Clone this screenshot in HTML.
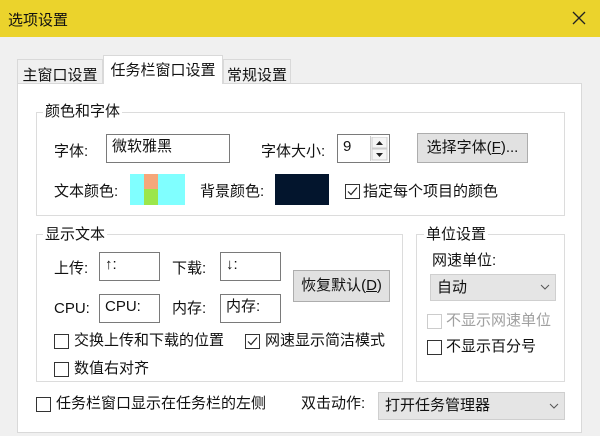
<!DOCTYPE html>
<html><head><meta charset="utf-8"><style>
*{box-sizing:border-box;margin:0;padding:0}
body{width:600px;height:436px;background:#f0f0f0;position:relative;overflow:hidden;font-family:"Liberation Sans","Noto Sans CJK SC",sans-serif;font-size:15px;color:#111}
.a{position:absolute;white-space:nowrap}
.t{line-height:18px;height:18px}
.title{left:0;top:0;width:600px;height:37px;background:#ebd32c}
.tab{border:1px solid #d9d9d9;border-bottom:none;background:#f0f0f0;text-align:center;padding-top:4px}
.panel{left:17px;top:83px;width:565px;height:350px;background:#fff;border:1px solid #d9d9d9}
.grp{border:1px solid #dcdcdc}
.gt{background:#fff;padding:0 2px}
.in{border:1px solid #7a7a7a;background:#fff;padding:2px 5px;line-height:20px}
.btn{border:1px solid #adadad;background:#e1e1e1;text-align:center}
.cb{width:15px;height:15px;border:1px solid #333;background:#fff}
.dd{background:#e5e5e5;border:1px solid #cfcfcf;padding-left:6px}
</style></head><body>
<div class="a title"></div>
<div class="a t" style="left:8px;top:12px;font-size:15px">选项设置</div>
<svg class="a" style="left:571px;top:10px" width="16" height="16"><path d="M2 2L14 14M14 2L2 14" stroke="#222" stroke-width="1.3"/></svg>
<div class="a tab" style="left:17px;top:59px;width:86px;height:24px">主窗口设置</div>
<div class="a tab" style="left:223px;top:59px;width:68px;height:24px">常规设置</div>
<div class="a panel"></div>
<div class="a tab" style="left:103px;top:55px;width:120px;height:29px;background:#fff;padding-top:3px">任务栏窗口设置</div>

<div class="a grp" style="left:36px;top:112px;width:529px;height:104px"></div>
<div class="a t gt" style="left:43px;top:103px">颜色和字体</div>
<div class="a t" style="left:54px;top:143px">字体:</div>
<div class="a in" style="left:106px;top:134px;width:124px;height:29px">微软雅黑</div>
<div class="a t" style="left:261px;top:143px">字体大小:</div>
<div class="a in" style="left:337px;top:134px;width:53px;height:29px">9</div>
<div class="a" style="left:370px;top:136px;width:18px;height:25px;border-left:1px solid #ccc"></div>
<svg class="a" style="left:371px;top:137px" width="17" height="24"><rect x="1" y="0" width="15" height="11" fill="#f5f5f5" stroke="#ccc"/><rect x="1" y="12" width="15" height="11" fill="#f5f5f5" stroke="#ccc"/><path d="M5 8L8.5 4L12 8Z M5 16L8.5 20L12 16Z" fill="#222"/></svg>
<div class="a btn t" style="left:417px;top:133px;width:111px;height:30px;line-height:28px">选择字体(<u>F</u>)...</div>
<div class="a t" style="left:54px;top:183px">文本颜色:</div>
<div class="a" style="left:130px;top:174px;width:55px;height:31px;background:#80ffff"></div>
<div class="a" style="left:144px;top:174px;width:14px;height:15px;background:#f5a77a"></div>
<div class="a" style="left:144px;top:189px;width:14px;height:16px;background:#9be64b"></div>
<div class="a t" style="left:200px;top:183px">背景颜色:</div>
<div class="a" style="left:275px;top:174px;width:54px;height:31px;background:#03152d"></div>
<div class="a cb" style="left:345px;top:184px"></div>
<svg class="a" style="left:345px;top:184px" width="15" height="15"><path d="M3 7.5L6 10.5L12 3.5" stroke="#222" fill="none" stroke-width="1.2"/></svg>
<div class="a t" style="left:363px;top:183px">指定每个项目的颜色</div>

<div class="a grp" style="left:36px;top:234px;width:367px;height:148px"></div>
<div class="a t gt" style="left:43px;top:226px">显示文本</div>
<div class="a t" style="left:54px;top:260px">上传:</div>
<div class="a in" style="left:99px;top:252px;width:61px;height:29px">↑:</div>
<div class="a t" style="left:172px;top:260px">下载:</div>
<div class="a in" style="left:220px;top:252px;width:61px;height:29px">↓:</div>
<div class="a t" style="left:54px;top:300px">CPU:</div>
<div class="a in" style="left:99px;top:294px;width:61px;height:29px">CPU:</div>
<div class="a t" style="left:172px;top:300px">内存:</div>
<div class="a in" style="left:220px;top:294px;width:61px;height:29px">内存:</div>
<div class="a btn t" style="left:293px;top:270px;width:97px;height:32px;line-height:30px">恢复默认(<u>D</u>)</div>
<div class="a cb" style="left:54px;top:334px"></div>
<div class="a t" style="left:74px;top:332px">交换上传和下载的位置</div>
<div class="a cb" style="left:245px;top:334px"></div>
<svg class="a" style="left:245px;top:334px" width="15" height="15"><path d="M3 7.5L6 10.5L12 3.5" stroke="#222" fill="none" stroke-width="1.2"/></svg>
<div class="a t" style="left:265px;top:332px">网速显示简洁模式</div>
<div class="a cb" style="left:54px;top:362px"></div>
<div class="a t" style="left:74px;top:360px">数值右对齐</div>

<div class="a grp" style="left:416px;top:234px;width:149px;height:148px"></div>
<div class="a t gt" style="left:424px;top:226px">单位设置</div>
<div class="a t" style="left:432px;top:252px">网速单位:</div>
<div class="a dd t" style="left:430px;top:274px;width:126px;height:27px;line-height:25px">自动</div>
<svg class="a" style="left:540px;top:284px" width="10" height="6"><path d="M1 1L5 5L9 1" stroke="#555" fill="none"/></svg>
<div class="a cb" style="left:427px;top:314px;border-color:#ccc"></div>
<div class="a t" style="left:446px;top:312px;color:#a0a0a0">不显示网速单位</div>
<div class="a cb" style="left:427px;top:340px"></div>
<div class="a t" style="left:446px;top:338px">不显示百分号</div>

<div class="a cb" style="left:36px;top:397px"></div>
<div class="a t" style="left:56px;top:395px">任务栏窗口显示在任务栏的左侧</div>
<div class="a t" style="left:301px;top:395px">双击动作:</div>
<div class="a dd t" style="left:378px;top:392px;width:187px;height:28px;line-height:26px">打开任务管理器</div>
<svg class="a" style="left:549px;top:403px" width="10" height="6"><path d="M1 1L5 5L9 1" stroke="#555" fill="none"/></svg>
</body></html>
